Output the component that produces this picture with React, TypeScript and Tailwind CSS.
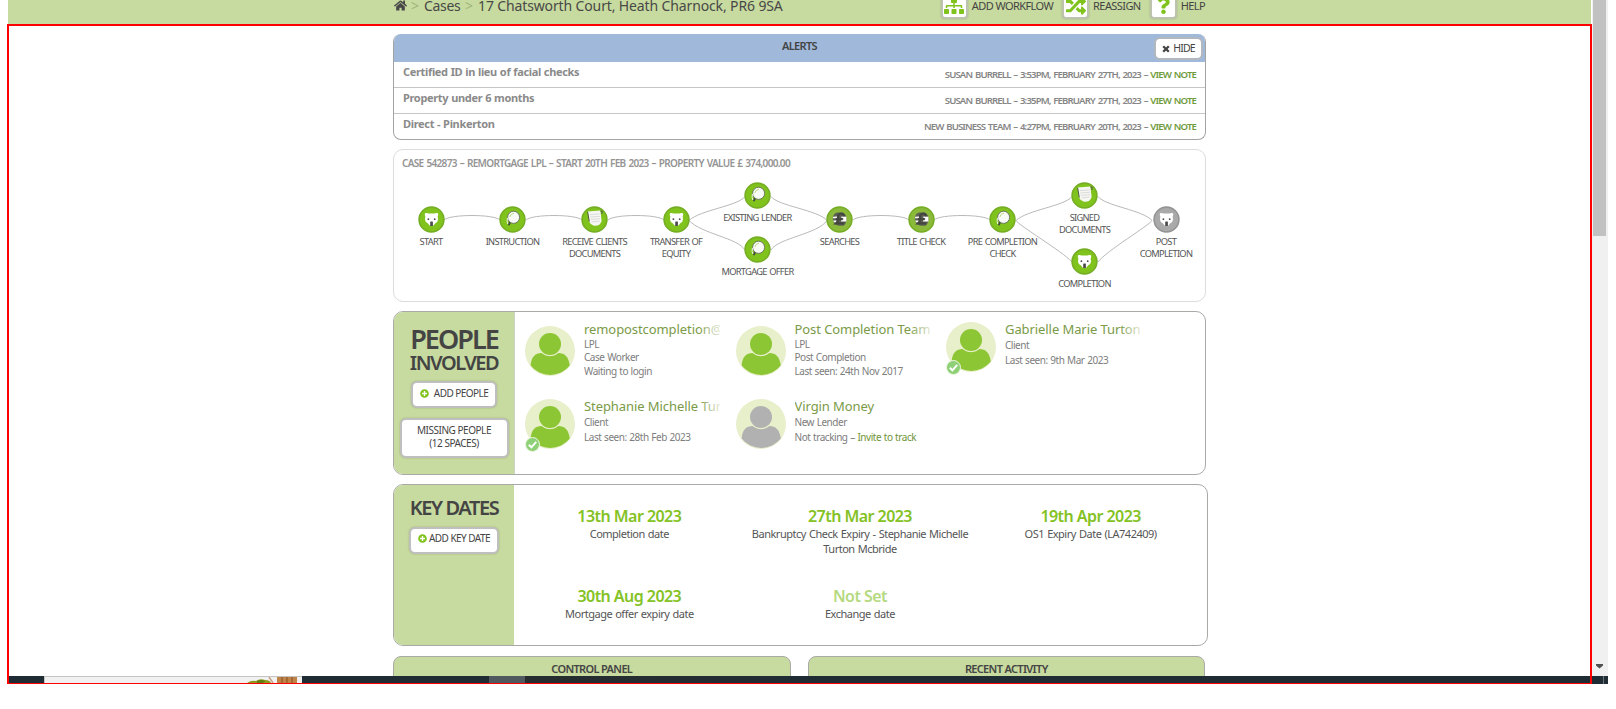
import type { ReactNode } from 'react';
import { FaHome, FaSitemap, FaRandom, FaQuestion, FaPlusCircle } from 'react-icons/fa';

type IconKind = 'bear' | 'glass' | 'doc' | 'pound';
type Stage = { x: number; y: number; kind: IconKind; lines: string[]; grey?: boolean };

const stages: Stage[] = [
  { x: 37, y: 70.5, kind: 'bear', lines: ['START'] },
  { x: 118.5, y: 70.5, kind: 'glass', lines: ['INSTRUCTION'] },
  { x: 200.5, y: 70.5, kind: 'doc', lines: ['RECEIVE CLIENTS', 'DOCUMENTS'] },
  { x: 282, y: 70.5, kind: 'bear', lines: ['TRANSFER OF', 'EQUITY'] },
  { x: 363.5, y: 46.5, kind: 'glass', lines: ['EXISTING LENDER'] },
  { x: 363.5, y: 100, kind: 'glass', lines: ['MORTGAGE OFFER'] },
  { x: 445.5, y: 70.5, kind: 'pound', lines: ['SEARCHES'] },
  { x: 527, y: 70.5, kind: 'pound', lines: ['TITLE CHECK'] },
  { x: 608.5, y: 70.5, kind: 'glass', lines: ['PRE COMPLETION', 'CHECK'] },
  { x: 690.5, y: 46.5, kind: 'doc', lines: ['SIGNED', 'DOCUMENTS'] },
  { x: 690.5, y: 112, kind: 'bear', lines: ['COMPLETION'] },
  { x: 772, y: 70.5, kind: 'bear', lines: ['POST', 'COMPLETION'], grey: true },
];

const connectors = [
  'M50 70 C56 64 100 64 106 70',
  'M132 70 C138 64 182 64 188 70',
  'M214 70 C220 64 264 64 270 70',
  'M295 70.5 C306 60 344 56 351 46.5',
  'M295 70.5 C308 84 344 88 351 100',
  'M377 46.5 C384 56 424 60 433 70.5',
  'M377 100 C384 88 424 84 433 70.5',
  'M459 70 C465 64 509 64 515 70',
  'M540 70 C546 64 590 64 596 70',
  'M622 70.5 C633 60 671 56 678 46.5',
  'M622 70.5 C624 75 668 101 678 112',
  'M704 46.5 C711 56 749 60 758 70.5',
  'M704 112 C712 101 756 75 758 70.5',
];

function StageIcon({ kind, grey }: { kind: IconKind; grey?: boolean }) {
  const fill = grey ? '#a9a9a9' : kind === 'pound' ? '#8bba3a' : '#80c31c';
  const rim = grey ? '#949494' : '#75ad25';
  return (
    <svg width="27" height="27" viewBox="0 0 27 27" className="block">
      <circle cx="13.5" cy="13.5" r="12.4" fill={fill} stroke={rim} strokeWidth="1.6" />
      {kind === 'bear' && (
        <g>
          <path d="M6.8 8 Q6.9 6.7 8.600 7 L10.500 7.600 H16.500 L18.400 7 Q20.100 6.700 20.200 8 Q20.300 9.400 19.700 10.200 L20 13.800 Q19.600 16.800 17 17.600 L15.600 19.400 L11.400 19.400 L10 17.600 Q7.400 16.800 7 13.800 L7.300 10.200 Q6.700 9.400 6.800 8 Z" fill="#fff" />
          <rect x="12.200" y="15.500" width="2.700" height="4.500" rx=".6" fill="#4b4b4b" />
          <circle cx="10.400" cy="13.200" r=".9" fill="#4b4b4b" />
          <circle cx="16.700" cy="13.200" r=".9" fill="#4b4b4b" />
        </g>
      )}
      {kind === 'glass' && (
        <g>
          <path d="M11.200 15.800 L10 18.400" stroke="#444" strokeWidth="1.900" strokeLinecap="round" />
          <ellipse cx="14.600" cy="11.300" rx="6" ry="6.100" fill="#f8faf5" stroke="#666c60" strokeWidth=".9" />
          <path d="M10.800 11 Q11.600 7.600 15 7.200" stroke="#b5d982" strokeWidth="1" fill="none" />
          <path d="M8.400 12 Q7.600 15.800 8.800 18" stroke="#f2f6ec" strokeWidth="1" fill="none" />
        </g>
      )}
      {kind === 'doc' && (
        <g>
          <path d="M6.800 5.600 L19.400 4.600 L20.600 15 Q20 17.600 18 19 Q15 20 12.400 19.400 Q9 18 8 15.400 Z" fill="#f6f6f4" />
          <path d="M6.600 5.800 L8.300 15.600" stroke="#4e5a3c" strokeWidth="1" />
          <path d="M19.400 5 L21.200 5.200 L20.800 8" stroke="#4e5a3c" strokeWidth="1" fill="none" />
          <path d="M9 8.600 L18.500 7.900 M9.300 11 L18.900 10.300 M9.700 13.400 L19 12.700 M10.600 15.800 L18.800 15.100" stroke="#cfd1cc" strokeWidth=".7" />
        </g>
      )}
      {kind === 'pound' && (
        <g>
          <path d="M11 6.500 Q8 7.200 7 10.500 Q6.200 14 8 17 Q10 19.600 13 19.800 H17.500 Q20.500 17.500 20.500 13 Q20.400 8 16.500 6.600 Z" fill="#5d6055" />
          <path d="M7.200 10.800 L11 10.600 L10.800 12.200 H7 Z M7.200 14.600 H10.800 L10.200 16.200 H8 Z M15.400 10.600 L20.400 10.800 L20.400 15.600 L15 15.600 L15.200 13.800 H17.200 V11.900 H15.400 Z" fill="#fff" />
          <path d="M18 10.200 C17.400 6.800 12 6.800 12.100 10.800 C12.200 13.800 12.600 15.600 10.200 17.400 H18.200 M9.800 13.100 H16.600" stroke="#44463f" strokeWidth="2.200" fill="none" />
        </g>
      )}
    </svg>
  );
}

function Workflow() {
  return (
    <section className="relative mt-[9px] h-[153px] w-[813px] rounded-[10px] border border-[#dcdcdc]">
      <h2 className="ml-[8px] mt-[6px] whitespace-nowrap text-[10px] font-semibold leading-[14px] tracking-[-0.670px] text-[#949494] [word-spacing:1px]">
        CASE 542873 – REMORTGAGE LPL – START 20TH FEB 2023 – PROPERTY VALUE £ 374,000.00
      </h2>
      <svg width="811" height="151" className="absolute left-0 top-0" fill="none" stroke="#b9b9b9">
        {connectors.map((d) => (
          <path key={d} d={d} />
        ))}
      </svg>
      {stages.map((s) => (
        <div key={s.lines.join() + s.x} className="absolute flex w-[90px] flex-col items-center" style={{ left: s.x - 45, top: s.y - 14.5 }}>
          <StageIcon kind={s.kind} grey={s.grey} />
          <div className="mt-[3px] text-center text-[9.300px] leading-[12px] tracking-[-0.720px] text-[#555] [word-spacing:0.800px]">
            {s.lines.map((l) => (
              <div key={l}>{l}</div>
            ))}
          </div>
        </div>
      ))}
    </section>
  );
}

function Avatar({ grey, verified }: { grey?: boolean; verified?: boolean }) {
  const c = grey ? '#b1b1b1' : '#8cc634';
  return (
    <div className="relative h-[50px] w-[50px] shrink-0">
      <svg width="50" height="50" viewBox="0 0 50 50" className="block">
        <circle cx="25" cy="25" r="25" fill="#e8efcb" />
        <path d="M5.600 39.500 C6.400 30.500 10.500 27 16.500 27 Q20.500 30.200 25 30.200 Q29.500 30.200 33.500 27 C39.500 27 43.600 30.500 44.800 39.500 A25 25 0 0 1 5.600 39.500 Z" fill={c} />
        <circle cx="25" cy="18" r="12" fill="#e8efcb" />
        <circle cx="25" cy="18" r="11" fill={c} />
      </svg>
      {verified && (
        <svg width="15" height="15" viewBox="0 0 15 15" className="absolute left-0 top-[38px]">
          <circle cx="7.500" cy="7.500" r="7" fill="#8ed076" stroke="#eef6e4" strokeWidth="1" />
          <path d="M3.800 7.800 L6.400 10.300 L11.200 4.800" stroke="#fff" strokeWidth="2" fill="none" />
        </svg>
      )}
    </div>
  );
}

type PersonProps = { name: string; lines: ReactNode[]; grey?: boolean; verified?: boolean; className: string };

function Person({ name, lines, grey, verified, className }: PersonProps) {
  const three = lines.length === 3;
  return (
    <div className={`flex w-[210.500px] items-start ${className}`}>
      <Avatar grey={grey} verified={verified} />
      <div className={three ? 'ml-[9px] mt-[-7px]' : 'ml-[9px] mt-[-3px]'}>
        <div className="relative h-[19px] w-[136px] whitespace-nowrap text-[13px] leading-[20px] tracking-[-0.080px] text-[#7a9a48]">
          <div className="h-[20px] overflow-hidden">{name}</div>
          <span className="absolute right-0 top-0 h-[20px] w-[22px] bg-linear-to-r from-transparent to-white/80" />
        </div>
        <div className={three ? 'text-[10px] leading-[13.300px] tracking-[-0.460px] text-[#7d7d7d] [word-spacing:0.500px]' : 'text-[10px] leading-[15px] tracking-[-0.460px] text-[#7d7d7d] [word-spacing:0.500px]'}>
          {lines.map((l, i) => (
            <div key={i} className="whitespace-nowrap">
              {l}
            </div>
          ))}
        </div>
      </div>
    </div>
  );
}

const button = 'flex items-center justify-center rounded-[6px] border-2 border-[#bfbfbf] bg-white text-[10px] text-[#444] shadow-[0_0_2px_rgba(0,0,0,0.2)] whitespace-nowrap';

function People() {
  return (
    <section className="mt-[9px] flex h-[164px] w-[813px] overflow-hidden rounded-[10px] border border-[#a9aaa6]">
      <aside className="flex w-[121px] shrink-0 flex-col items-center border-r border-[#d0d4c8] bg-[#c7da9f] text-[#444]">
        <h2 className="mt-[12px] text-[27px] font-semibold leading-[29px] tracking-[-1.950px]">PEOPLE</h2>
        <h3 className="mt-px text-[20px] font-semibold leading-[17px] tracking-[-1.500px]">INVOLVED</h3>
        <div className={`${button} mt-[10px] h-[27px] w-[86px] gap-[5px] pb-[3px] tracking-[-0.550px]`}>
          <FaPlusCircle className="text-[9px] text-[#80c31c]" />
          ADD PEOPLE
        </div>
        <div className={`${button} mt-[10px] h-[40px] w-[109px] pb-[3px] text-center leading-[13px] tracking-[-0.470px]`}>
          MISSING PEOPLE
          <br />
          (12 SPACES)
        </div>
      </aside>
      <div className="flex flex-col pl-[10px]">
        <div className="flex h-[73px]">
          <Person className="mt-[14px]" name="remopostcompletion@lpl" lines={['LPL', 'Case Worker', 'Waiting to login']} />
          <Person className="mt-[14px]" name="Post Completion Team" lines={['LPL', 'Post Completion', 'Last seen: 24th Nov 2017']} />
          <Person className="mt-[10px]" name="Gabrielle Marie Turton" lines={['Client', 'Last seen: 9th Mar 2023']} verified />
        </div>
        <div className="flex">
          <Person className="mt-[14px]" name="Stephanie Michelle Turton" lines={['Client', 'Last seen: 28th Feb 2023']} verified />
          <Person
            className="mt-[14px]"
            name="Virgin Money"
            lines={['New Lender', <>Not tracking – <span className="text-[#6f9438]">Invite to track</span></>]}
            grey
          />
        </div>
      </div>
    </section>
  );
}

const dates = [
  { d: '13th Mar 2023', t: 'Completion date' },
  { d: '27th Mar 2023', t: 'Bankruptcy Check Expiry - Stephanie Michelle Turton Mcbride' },
  { d: '19th Apr 2023', t: 'OS1 Expiry Date (LA742409)' },
  { d: '30th Aug 2023', t: 'Mortgage offer expiry date' },
  { d: 'Not Set', t: 'Exchange date', off: true },
];

function KeyDates() {
  return (
    <section className="mt-[9px] flex h-[162px] w-[815px] overflow-hidden rounded-[10px] border border-[#a9aaa6]">
      <aside className="flex w-[120px] shrink-0 flex-col items-center bg-[#c7da9f] text-[#444]">
        <h2 className="mt-[11px] text-[20px] font-semibold leading-[24px] tracking-[-1.400px]">KEY DATES</h2>
        <div className={`${button} mt-[7px] h-[27px] w-[90px] gap-[2px] pb-[4px] tracking-[-0.540px]`}>
          <FaPlusCircle className="text-[9px] text-[#80c31c]" />
          ADD KEY DATE
        </div>
      </aside>
      <div className="grid w-[692px] grid-cols-3 grid-rows-[80px_60px] pt-[21px]">
        {dates.map((k) => (
          <div key={k.d} className="flex flex-col items-center">
            <div className={k.off ? 'text-[16px] font-semibold leading-[20px] tracking-[-0.550px] text-[#b5d97f]' : 'text-[16px] font-semibold leading-[20px] tracking-[-0.550px] text-[#84c225]'}>{k.d}</div>
            <div className="w-[222px] text-center text-[11px] leading-[15px] tracking-[-0.490px] text-[#555] [word-spacing:0.700px]">{k.t}</div>
          </div>
        ))}
      </div>
    </section>
  );
}

const alerts = [
  ['Certified ID in lieu of facial checks', 'SUSAN BURRELL – 3:53PM, FEBRUARY 27TH, 2023'],
  ['Property under 6 months', 'SUSAN BURRELL – 3:35PM, FEBRUARY 27TH, 2023'],
  ['Direct - Pinkerton', 'NEW BUSINESS TEAM – 4:27PM, FEBRUARY 20TH, 2023'],
];

function Alerts() {
  return (
    <section className="w-[813px] overflow-hidden rounded-[8px] border border-t-0 border-[#a3a3a3]">
      <header className="relative flex h-[28px] items-center justify-center bg-[#a0b9db] pb-[3px] text-[11px] font-semibold tracking-[-0.650px] text-[#444]">
        ALERTS
        <div className="absolute right-[2px] top-[3px] flex h-[23px] w-[49px] items-center justify-center gap-[3px] rounded-[6px] border-2 border-[#b3b7be] bg-white text-[10.500px] font-normal tracking-[-0.800px]">
          <svg width="8" height="8" viewBox="0 0 8 8">
            <path d="M1.200 1.200 L6.800 6.800 M6.800 1.200 L1.200 6.800" stroke="#444" strokeWidth="2.300" />
          </svg>
          HIDE
        </div>
      </header>
      {alerts.map(([title, meta], i) => (
        <div key={title} className={`flex justify-between pl-[9px] pr-[9px] ${i < 2 ? 'h-[26px] border-b border-[#c6c6c6]' : 'h-[25px]'}`}>
          <span className="text-[11px] font-bold leading-[20px] tracking-[-0.330px] text-[#8a8a8a] [word-spacing:0.400px]">{title}</span>
          <span className="text-[9.600px] font-semibold leading-[26px] tracking-[-0.860px] text-[#858585] [word-spacing:1.100px]">
            {meta} – <span className="text-[#6f9a3c]">VIEW NOTE</span>
          </span>
        </div>
      ))}
    </section>
  );
}

function Action({ icon, label, gap }: { icon: ReactNode; label: string; gap: string }) {
  return (
    <div className={`flex items-center text-[11px] tracking-[-0.580px] text-[#444] ${gap}`}>
      <span className="mr-[4px] flex h-[27px] w-[27px] items-center justify-center rounded-[4px] border-2 border-[#bcc3ae] bg-white text-[20px] text-[#80c31c] shadow-[0_0_2px_rgba(0,0,0,0.2)]">
        {icon}
      </span>
      <span className="pt-px">{label}</span>
    </div>
  );
}

function TopBar() {
  return (
    <div className="ml-[8px] h-[24px] w-[1583px] overflow-hidden bg-[#c7da9f]">
      <div className="-mt-[8px] ml-[385px] flex h-[27px] w-[812px] items-center justify-between">
        <nav className="flex items-center whitespace-nowrap text-[14px] tracking-[-0.130px] text-[#484848]">
          <FaHome className="ml-px w-[13px] text-[13px]" />
          <span className="ml-[4px] w-[9px] text-[#9fb57b]">&gt;</span>
          <span className="ml-[4px] w-[38px] tracking-[-0.300px]">Cases</span>
          <span className="ml-[3px] w-[9px] text-[#9fb57b]">&gt;</span>
          <span className="ml-[4px]">17 Chatsworth Court, Heath Charnock, PR6 9SA</span>
        </nav>
        <div className="flex items-center">
          <Action icon={<FaSitemap />} label="ADD WORKFLOW" gap="mr-[9px]" />
          <Action icon={<FaRandom />} label="REASSIGN" gap="mr-[9px]" />
          <Action icon={<FaQuestion className="text-[17px]" />} label="HELP" gap="" />
        </div>
      </div>
    </div>
  );
}

function PanelHead({ children }: { children: ReactNode }) {
  return (
    <div className="h-[40px] w-[397.500px] rounded-t-[8px] border border-[#a9aaa6] bg-[#c7da9f] pt-[3px] text-center text-[11px] font-semibold leading-[18px] tracking-[-0.660px] text-[#444]">
      {children}
    </div>
  );
}

export default function App() {
  return (
    <div className="h-[709px] w-[1616px] overflow-hidden bg-white font-['Noto_Sans',sans-serif]">
      <div className="flex h-[676px]">
        <div className="flex w-[1592px] flex-col">
          <TopBar />
          <main className="ml-[7px] h-[652px] w-[1585px] overflow-hidden border-x-2 border-t-2 border-[#ff0000]">
            <div className="ml-[384px] mt-[8px] flex flex-col">
              <Alerts />
              <Workflow />
              <People />
              <KeyDates />
              <div className="mt-[10px] flex gap-[17px]">
                <PanelHead>CONTROL PANEL</PanelHead>
                <PanelHead>RECENT ACTIVITY</PanelHead>
              </div>
            </div>
          </main>
        </div>
        <div className="flex w-[16px] flex-col justify-between bg-[#f0f0f0]">
          <div className="ml-px h-[236px] w-[13px] bg-[#c1c1c1]" />
          <svg width="16" height="14" className="mb-px">
            <path d="M4 3 H11 V4.500 L7.500 7.500 L4 4.500 Z" fill="#505050" />
          </svg>
        </div>
      </div>
      <footer className="ml-[7px] flex h-[8px] w-[1601px] border-l-2 border-[#ff0000] bg-[#202c33]">
        <div className="flex h-full w-[1583px] border-b border-r-2 border-[#ff0000]">
          <div className="ml-[35px] flex h-full w-[258px] border-l border-t border-[#c4c4c4] bg-[#f1f1f1]">
            <svg width="257" height="6" className="block">
              <path d="M202 6 Q206 3 211 4 Q215 1 220 3 Q225 3 226 6 Z" fill="#8a9a1c" />
              <path d="M212 4 Q216 2 220 4 L218 6 H212 Z" fill="#5f7d12" />
              <path d="M224 0 L228 6" stroke="#c9a083" strokeWidth="1.500" />
              <path d="M232 0 H252 V6 H232 Z" fill="#c08347" />
              <path d="M237 0 V6 M242 0 V6 M247 0 V6" stroke="#94592a" strokeWidth="1.200" />
            </svg>
          </div>
          <div className="ml-[187px] h-full w-[36px] bg-[#50595e]" />
          <div className="h-full w-[250px] bg-linear-to-r from-[#272d2e] to-[#202c33]" />
        </div>
        <div className="ml-[11px] h-full w-px bg-[#6a747a]" />
      </footer>
    </div>
  );
}
